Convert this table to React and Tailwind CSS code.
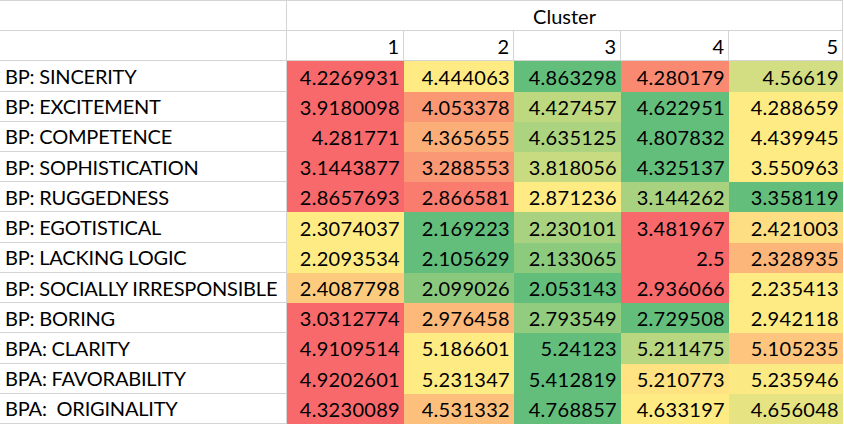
const rows = [
  { label: "BP: SINCERITY", values: ["4.2269931", "4.444063", "4.863298", "4.280179", "4.56619"] },
  { label: "BP: EXCITEMENT", values: ["3.9180098", "4.053378", "4.427457", "4.622951", "4.288659"] },
  { label: "BP: COMPETENCE", values: ["4.281771", "4.365655", "4.635125", "4.807832", "4.439945"] },
  { label: "BP: SOPHISTICATION", values: ["3.1443877", "3.288553", "3.818056", "4.325137", "3.550963"] },
  { label: "BP: RUGGEDNESS", values: ["2.8657693", "2.866581", "2.871236", "3.144262", "3.358119"] },
  { label: "BP: EGOTISTICAL", values: ["2.3074037", "2.169223", "2.230101", "3.481967", "2.421003"], reverse: true },
  { label: "BP: LACKING LOGIC", values: ["2.2093534", "2.105629", "2.133065", "2.5", "2.328935"], reverse: true },
  { label: "BP: SOCIALLY IRRESPONSIBLE", values: ["2.4087798", "2.099026", "2.053143", "2.936066", "2.235413"], reverse: true },
  { label: "BP: BORING", values: ["3.0312774", "2.976458", "2.793549", "2.729508", "2.942118"], reverse: true },
  { label: "BPA: CLARITY", values: ["4.9109514", "5.186601", "5.24123", "5.211475", "5.105235"] },
  { label: "BPA: FAVORABILITY", values: ["4.9202601", "5.231347", "5.412819", "5.210773", "5.235946"] },
  { label: "BPA:  ORIGINALITY", values: ["4.3230089", "4.531332", "4.768857", "4.633197", "4.656048"] },
];

const RED = [248, 105, 107];
const YELLOW = [255, 235, 132];
const GREEN = [99, 190, 123];

function mix(a, b, t) {
  return a.map((c, i) => Math.round(c + (b[i] - c) * t));
}

// excel style 3-colour scale: min, 50th percentile, max
function scaleColors(values, reverse) {
  const nums = values.map(Number);
  const sorted = [...nums].sort((a, b) => a - b);
  const min = sorted[0];
  const max = sorted[sorted.length - 1];
  const mid = sorted[Math.floor(sorted.length / 2)];
  const low = reverse ? GREEN : RED;
  const high = reverse ? RED : GREEN;
  return nums.map((v) => {
    let c;
    if (v <= mid) c = mix(low, YELLOW, mid === min ? 1 : (v - min) / (mid - min));
    else c = mix(YELLOW, high, (v - mid) / (max - mid));
    return `rgb(${c[0]}, ${c[1]}, ${c[2]})`;
  });
}

const line = "border-[#d4d4d4]";

export default function App() {
  return (
    <div className="h-[424px] w-[844px] overflow-hidden bg-white font-['Lato',sans-serif] text-[20px] text-black">
      <div className={`grid h-[424px] w-[843px] grid-cols-[287px_117px_110px_107px_108px_114px] grid-rows-[repeat(14,minmax(0,1fr))] border-t ${line}`}>
        <div className={`border-b border-r ${line}`} />
        <div className={`col-span-5 flex items-center justify-center border-b border-r ${line}`}>Cluster</div>

        <div className={`border-b border-r ${line}`} />
        {[1, 2, 3, 4, 5].map((n) => (
          <div key={n} className={`flex items-center justify-end border-b border-r pr-1 ${line}`}>
            {n}
          </div>
        ))}

        {rows.map((row) => {
          const colors = scaleColors(row.values, row.reverse);
          return [
            <div key={row.label} className={`flex items-center whitespace-pre border-b border-r pl-[5px] tracking-[-0.2px] ${line}`}>
              {row.label}
            </div>,
            ...row.values.map((v, i) => (
              <div
                key={row.label + i}
                className="flex items-center justify-end pr-1 tracking-[0.3px]"
                style={{ backgroundColor: colors[i] }}
              >
                {v}
              </div>
            )),
          ];
        })}
      </div>
    </div>
  );
}
